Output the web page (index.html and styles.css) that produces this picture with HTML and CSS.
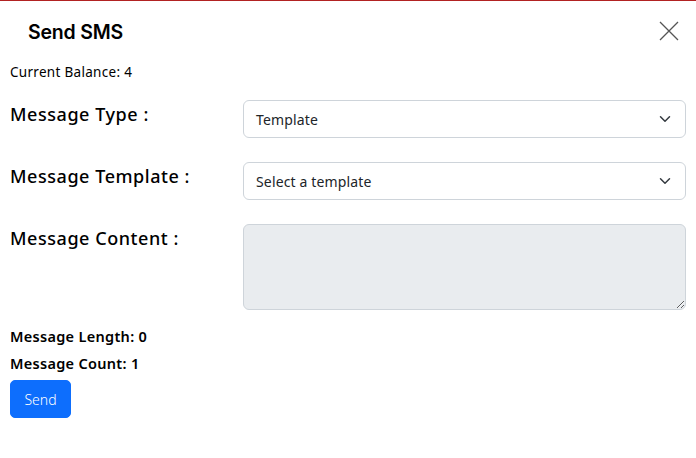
FILE: index.html
```html
<!DOCTYPE html>
<html>
<head>
<meta charset="utf-8">
<link rel="stylesheet" href="styles.css">
</head>
<body>
<div class="modal">
  <div class="modal-header">
    <h5 class="title">Send SMS</h5>
    <button class="close" aria-label="Close">
      <svg width="20" height="20" viewBox="0 0 20 20"><path d="M1 1L19 19M19 1L1 19" stroke="#555" stroke-width="1.3" fill="none"/></svg>
    </button>
  </div>
  <div class="modal-body">
    <p class="balance">Current Balance: 4</p>
    <div class="form-row">
      <label class="label">Message Type :</label>
      <div class="select"><span>Template</span><svg width="12" height="12" viewBox="0 0 16 16"><path d="M2 5l6 6 6-6" stroke="#343a40" stroke-width="2" fill="none" stroke-linecap="round" stroke-linejoin="round"/></svg></div>
    </div>
    <div class="form-row">
      <label class="label">Message Template :</label>
      <div class="select"><span>Select a template</span><svg width="12" height="12" viewBox="0 0 16 16"><path d="M2 5l6 6 6-6" stroke="#343a40" stroke-width="2" fill="none" stroke-linecap="round" stroke-linejoin="round"/></svg></div>
    </div>
    <div class="form-row last">
      <label class="label">Message Content :</label>
      <textarea class="textarea" disabled></textarea>
    </div>
    <p class="stat">Message Length: 0</p>
    <p class="stat">Message Count: 1</p>
    <button class="btn">Send</button>
  </div>
</div>
</body>
</html>
```
FILE: styles.css
```css
* { box-sizing: border-box; }
html, body { margin: 0; padding: 0; background: #fff; }
body {
  font-family: "Noto Sans", "Open Sans", sans-serif;
  color: #212529;
  border-top: 1px solid #b22222;
}
.modal { width: 696px; }
.modal-header {
  display: flex;
  align-items: center;
  justify-content: space-between;
  height: 61px;
  padding: 0 16px 0 28px;
}
.title {
  margin: 0;
  font-family: Inter, "Noto Sans", sans-serif;
  font-size: 19.5px;
  font-weight: 600;
  color: #000;
  letter-spacing: -0.2px;
}
.close {
  border: 0;
  background: none;
  padding: 0;
  width: 22px;
  height: 22px;
  display: flex;
  align-items: center;
  justify-content: center;
  margin-top: -2px;
}
.modal-body { padding: 0 10px; }
.balance {
  margin: 0 0 18px;
  font-size: 13.5px;
  line-height: 20px;
  color: #000;
  letter-spacing: 0.3px;
}
.form-row {
  display: grid;
  grid-template-columns: 209px 1fr;
  column-gap: 24px;
  margin-bottom: 24px;
}
.form-row.last { margin-bottom: 16px; }
.label {
  font-size: 18px;
  font-weight: 500;
  color: #000;
  line-height: 26px;
  padding-top: 1px;
  letter-spacing: 0.55px;
}
.select {
  height: 38px;
  border: 1px solid #ced4da;
  border-radius: 6px;
  display: flex;
  align-items: center;
  justify-content: space-between;
  padding: 0 14px 0 12px;
  font-size: 14px;
  color: #212529;
  letter-spacing: 0.15px;
}
.textarea {
  height: 86px;
  width: 100%;
  background: #e9ecef;
  border: 1px solid #ced4da;
  border-radius: 6px;
  resize: vertical;
  display: block;
  margin: 0;
}
.stat {
  margin: 0 0 6px;
  font-size: 14.5px;
  font-weight: 600;
  line-height: 21px;
  color: #000;
  letter-spacing: 0.3px;
}
.btn {
  margin-top: 0;
  background: #0d6efd;
  color: #fff;
  border: 1px solid #0d6efd;
  border-radius: 5px;
  font-family: "Noto Sans", sans-serif;
  font-size: 14px;
  font-weight: 300;
  height: 38px;
  width: 61px;
  padding: 0;
  display: block;
}
```
